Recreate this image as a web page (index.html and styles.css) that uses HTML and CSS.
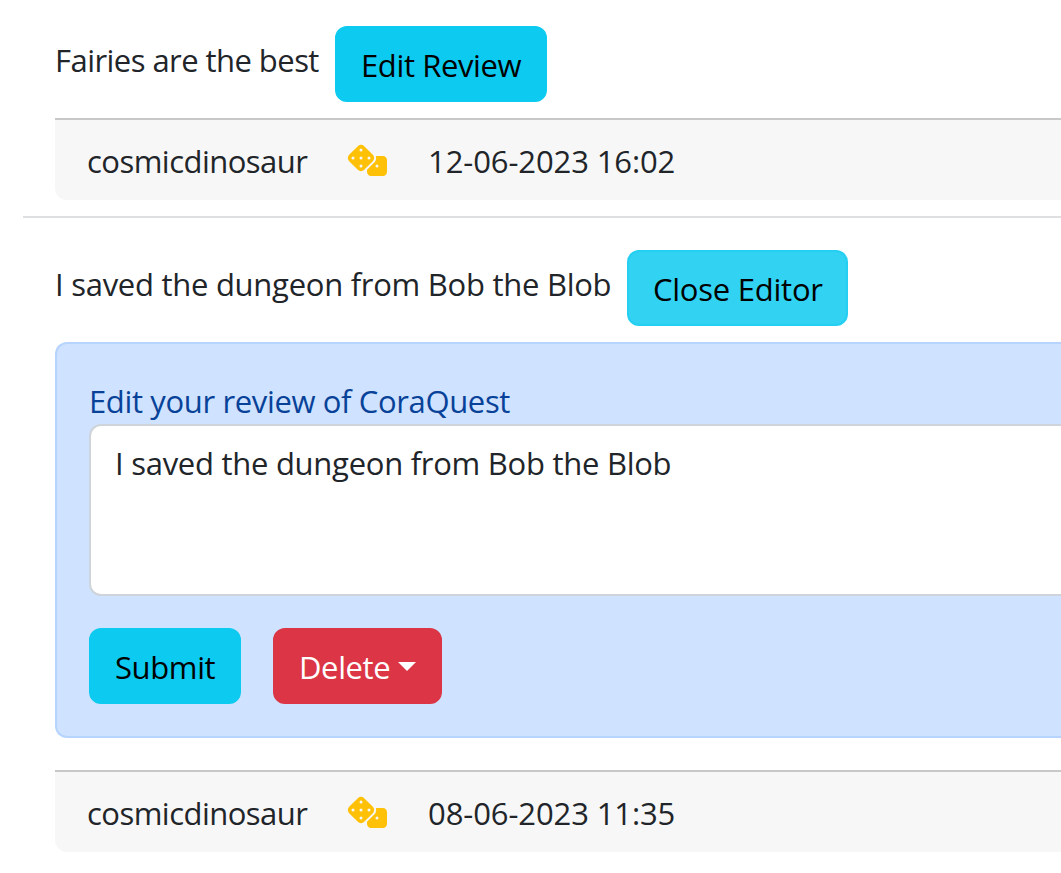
FILE: index.html
```
<!DOCTYPE html>
<html lang="en">
<head>
<meta charset="utf-8">
<title>Reviews</title>
<link rel="stylesheet" href="styles.css">
</head>
<body>
<svg class="sprite" aria-hidden="true"><symbol id="dice" viewBox="0 0 640 512"><path d="M274.9 34.3c-28.1-28.1-73.7-28.1-101.8 0L34.3 173.1c-28.1 28.1-28.1 73.7 0 101.8L173.1 413.7c28.1 28.1 73.7 28.1 101.8 0L413.7 274.9c28.1-28.1 28.1-73.7 0-101.8L274.9 34.3zM200 224a24 24 0 1 1 48 0 24 24 0 1 1 -48 0zM96 200a24 24 0 1 1 0 48 24 24 0 1 1 0-48zM224 376a24 24 0 1 1 0-48 24 24 0 1 1 0 48zM352 200a24 24 0 1 1 0 48 24 24 0 1 1 0-48zM224 120a24 24 0 1 1 0-48 24 24 0 1 1 0 48zm96 328c0 35.3 28.7 64 64 64H576c35.3 0 64-28.7 64-64V256c0-35.3-28.7-64-64-64H461.7c11.6 36 3.1 77-25.4 105.5L320 413.8V448zM480 328a24 24 0 1 1 0 48 24 24 0 1 1 0-48z"/></symbol></svg>
<main class="reviews">
  <article class="review">
    <div class="review-head">
      <p class="review-text short">Fairies are the best</p>
      <button class="btn btn-info btn-edit" type="button">Edit Review</button>
    </div>
    <footer class="review-footer">
      <span class="author">cosmicdinosaur</span>
      <svg class="dice"><use href="#dice"/></svg>
      <time class="date">12-06-2023 16:02</time>
    </footer>
  </article>
  <article class="review">
    <div class="review-head">
      <p class="review-text long">I saved the dungeon from Bob the Blob</p>
      <button class="btn btn-info btn-close active" type="button">Close Editor</button>
    </div>
    <form class="editor">
      <label class="editor-label" for="text">Edit your review of CoraQuest</label>
      <textarea class="editor-input" id="text">I saved the dungeon from Bob the Blob</textarea>
      <div class="actions">
        <button class="btn btn-info btn-submit" type="button">Submit</button>
        <button class="btn btn-danger" type="button">Delete<span class="caret"></span></button>
      </div>
    </form>
    <footer class="review-footer">
      <span class="author">cosmicdinosaur</span>
      <svg class="dice"><use href="#dice"/></svg>
      <time class="date">08-06-2023 11:35</time>
    </footer>
  </article>
</main>
</body>
</html>
```
FILE: styles.css
```
* { box-sizing: border-box; }
body {
  margin: 0;
  background: #fff;
  color: #212529;
  font: 31px/48px "Open Sans", "Noto Sans", sans-serif;
}
.sprite { display: none; }
.reviews { margin-left: 23px; padding-top: 10px; }
.review { padding: 16px 0 16px 32px; }
.review + .review { border-top: 2px solid #dedfe0; padding-top: 32px; }
.review-head { display: flex; align-items: flex-start; margin-bottom: 16px; }
.review-text { margin: 0; padding-top: 10px; white-space: nowrap; }
.short { width: 280px; letter-spacing: -0.55px; }
.long { width: 572px; letter-spacing: -0.27px; }
.btn {
  display: flex;
  align-items: center;
  height: 76px;
  margin: 0;
  padding: 13px 24px 11px;
  border: 2px solid #0dcaf0;
  border-radius: 12px;
  color: #000;
  font: inherit;
  letter-spacing: -0.38px;
  white-space: nowrap;
}
.btn-info { background: #0dcaf0; }
.btn-edit { width: 212px; }
.btn-close { width: 221px; letter-spacing: -0.24px; }
.btn-submit { width: 152px; }
.active { background: #31d2f2; border-color: #25cff2; }
.btn-danger { width: 169px; background: #dc3545; border-color: #dc3545; color: #fff; }
.caret {
  margin: -2px 0 0 8px;
  border-top: 9.6px solid #fff;
  border-left: 9.6px solid transparent;
  border-right: 9.6px solid transparent;
}
.review-footer {
  display: flex;
  height: 82px;
  padding: 17px 32px 15px;
  border-top: 2px solid #c8c8c8;
  border-radius: 0 0 0 12px;
  background: #f7f7f7;
}
.author { width: 260px; letter-spacing: -0.53px; }
.dice { width: 40px; height: 32px; margin: 7px 41px 0 0; fill: #ffc107; }
.date { letter-spacing: -0.1px; white-space: nowrap; }
.editor {
  height: 396px;
  margin-bottom: 32px;
  padding: 33px 0 31px 32px;
  border: 2px solid #b6d4fe;
  border-right: 0;
  border-radius: 12px 0 0 12px;
  background: #cfe2ff;
}
.editor-label { display: block; margin-bottom: -1px; color: #084298; letter-spacing: -0.36px; }
.editor-input {
  display: block;
  width: 100%;
  height: 172px;
  margin: 0 0 32px;
  padding: 13px 24px;
  border: 2px solid #ced4da;
  border-right: 0;
  border-radius: 12px 0 0 12px;
  background: #fff;
  color: #212529;
  font: inherit;
  letter-spacing: -0.27px;
  resize: none;
  outline: 0;
}
.actions { display: flex; gap: 32px; }
```
